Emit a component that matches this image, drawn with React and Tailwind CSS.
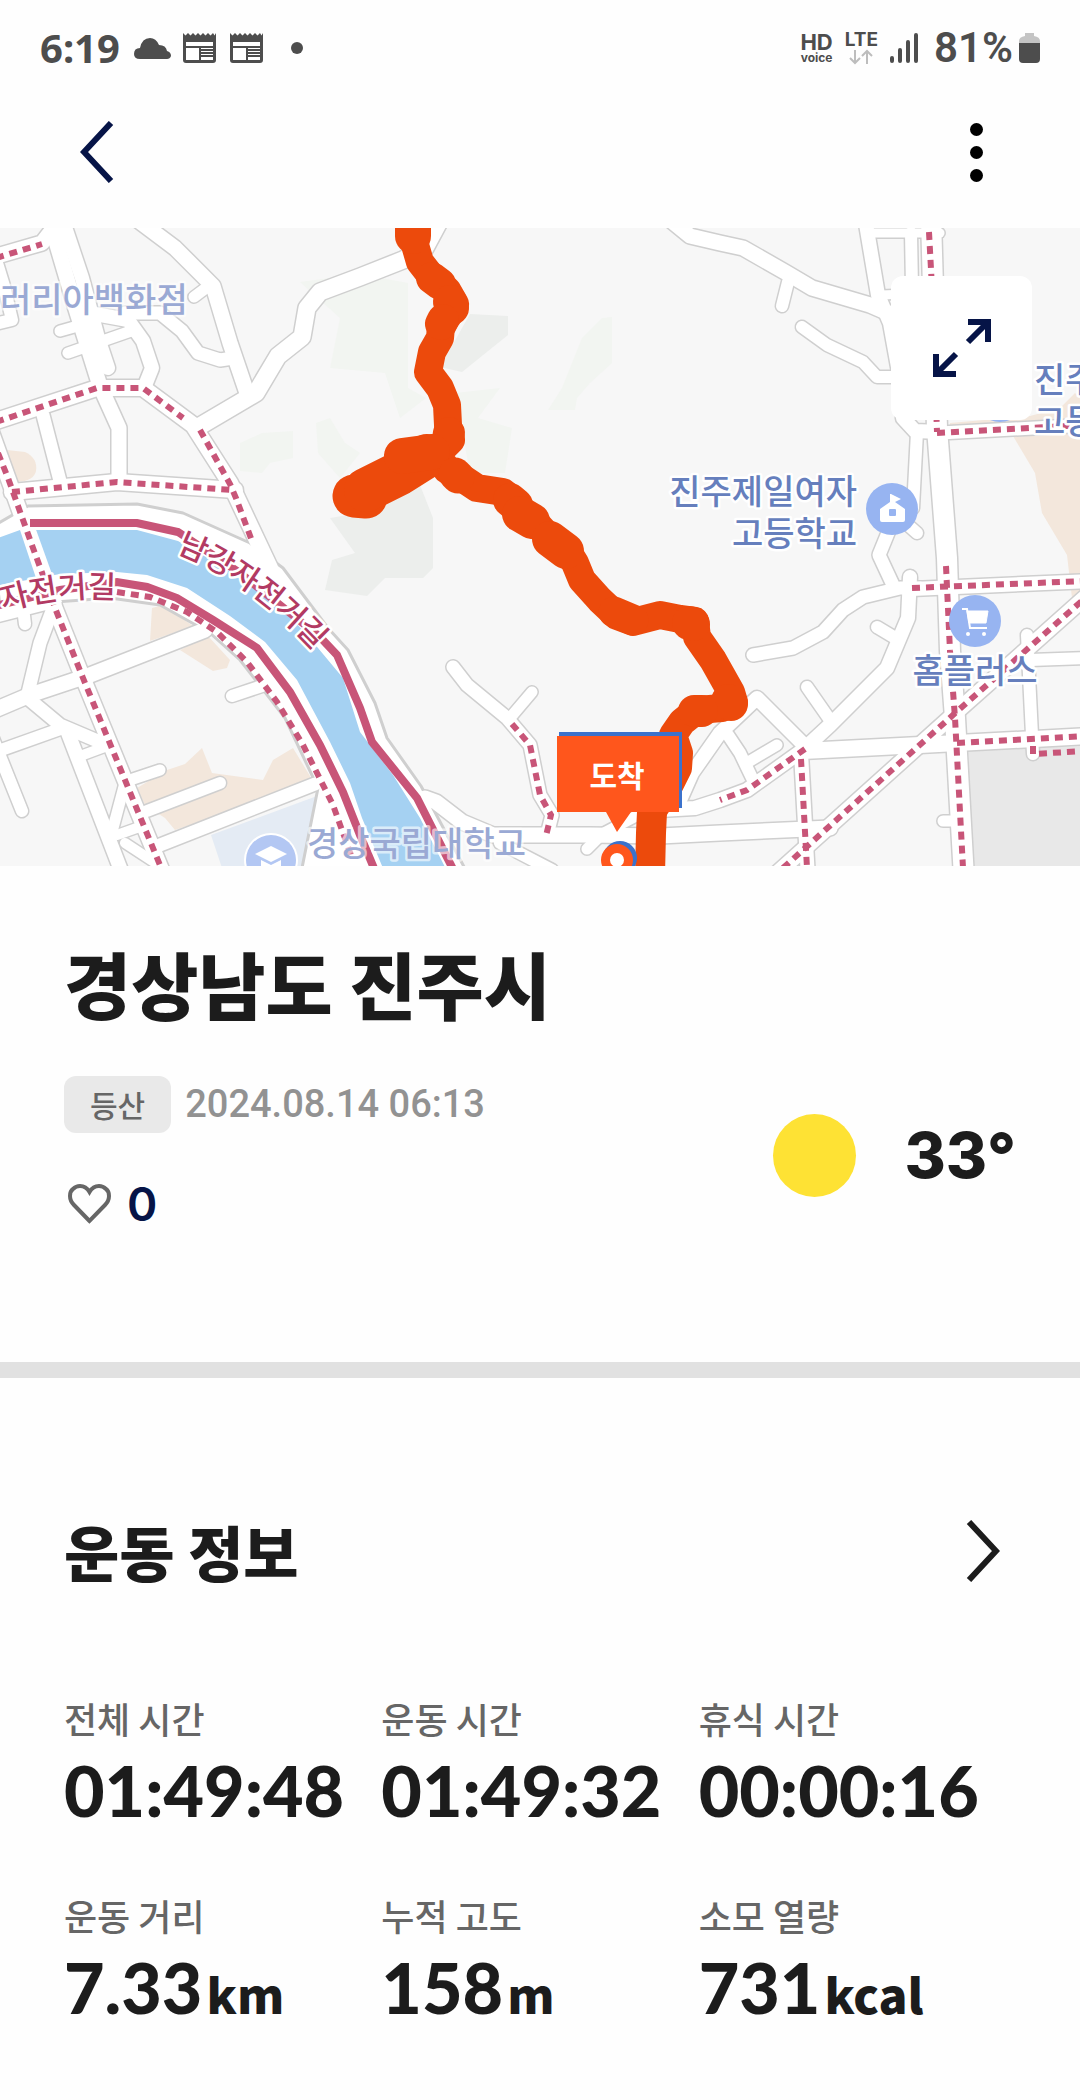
const ROADS = [
  { w: 15, d: "-10,30 42,15 60,-8" },
  { w: 15, d: "52,0 75,78 100,158 119,200 119,253" },
  { w: 14, d: "62,-10 82,50 98,110 108,140" },
  { w: 15, d: "135,-10 175,20 213,58 230,115 247,165" },
  { w: 11, d: "194,69 210,57" },
  { w: 17, d: "200,198 256,165 278,128 302,109 307,80 320,64 360,49 403,32 425,20 440,-8" },
  { w: 16, d: "-10,195 97,160 143,160 193,197 230,255 270,340" },
  { w: 13, d: "125,85 160,85 182,103 198,125 220,132 233,130" },
  { w: 14, d: "95,86 128,92 143,113 152,140 146,155" },
  { w: 11, d: "60,103 92,94" },
  { w: 11, d: "68,125 134,102" },
  { w: 12, d: "-10,97 12,92 4,58 -3,35" },
  { w: 13, d: "43,187 60,253" },
  { w: 16, d: "12,264 117,254 235,262" },
  { w: 15, d: "-10,200 8,250 33,320 55,380 83,450 165,650" },
  // south-west blocks
  { w: 16, d: "-10,388 53,372" },
  { w: 12, d: "25,396 23,380" },
  { w: 13, d: "55,375 40,415 28,465" },
  { w: 15, d: "-10,484 30,467 90,447 205,402" },
  { w: 13, d: "30,472 60,497 107,517" },
  { w: 12, d: "-10,526 63,500" },
  { w: 12, d: "-8,508 22,583" },
  { w: 14, d: "68,505 122,645" },
  { w: 10, d: "83,527 110,517" },
  { w: 11, d: "125,555 113,600" },
  { w: 10, d: "117,607 145,597" },
  { w: 10, d: "125,615 160,638" },
  { w: 11, d: "133,551 160,542" },
  { w: 12, d: "147,583 220,555" },
  { w: 13, d: "160,617 315,556" },
  { w: 12, d: "232,468 262,458" },
  // middle
  { w: 13, d: "453,439 467,457 507,490 530,517 540,567 552,587 547,607" },
  { w: 11, d: "532,464 510,490" },
  { w: 15, d: "425,570 436,574 462,594 493,607 590,607 660,608 720,605 830,600" },
  { w: 12, d: "500,615 552,642" },
  { w: 11, d: "587,621 602,606 640,586" },
  // east
  { w: 15, d: "668,-10 690,8 720,15 743,20 785,44 812,60 870,77 893,87" },
  { w: 12, d: "788,54 782,78" },
  { w: 12, d: "802,99 827,117 863,134 877,149 900,149" },
  { w: 14, d: "865,-10 878,67 890,95 900,150 903,190 915,203 940,204" },
  { w: 9, d: "867,5 940,5" },
  { w: 9, d: "882,67 930,65" },
  { w: 12, d: "911,5 912,60" },
  { w: 20, d: "931,-10 937,200 947,330 950,423 955,490 964,650" },
  { w: 12, d: "917,204 913,280" },
  { w: 12, d: "917,305 900,290" },
  { w: 13, d: "890,300 879,327 893,357" },
  { w: 13, d: "940,205 1090,197" },
  { w: 14, d: "912,361 1090,353" },
  { w: 13, d: "753,427 793,420 823,404 843,382 863,369 900,360 920,360" },
  { w: 14, d: "910,349 908,390 887,440 830,497 803,522" },
  { w: 12, d: "877,399 897,411" },
  { w: 12, d: "807,459 830,492" },
  { w: 14, d: "807,520 757,470 720,505 692,545 680,572" },
  { w: 12, d: "728,507 740,525 752,550" },
  { w: 11, d: "777,517 750,533" },
  { w: 14, d: "803,522 747,562 720,572 695,580 660,582" },
  { w: 16, d: "803,523 920,517 1090,508" },
  { w: 14, d: "801,525 808,650" },
  { w: 15, d: "775,647 953,487 1090,365" },
  { w: 12, d: "1027,407 1032,507 1033,526" },
  { w: 12, d: "1030,432 1090,430" },
  { w: 11, d: "943,593 960,593" },
];

const BIKE_LANES = [
  "-4,30 42,16",
  "-4,194 97,160 143,160 183,190",
  "200,202 230,256 236,270 252,313",
  "12,264 117,254 232,262",
  "-2,225 8,250 33,320 55,380 83,450 162,642",
  "117,364 150,369 187,384 217,404 247,434 277,474 303,517 333,577 352,630",
  "512,496 530,517 540,567 551,587 546,608",
  "929,4 932,60 937,204",
  "937,205 1085,197",
  "912,360 1085,353",
  "946,338 950,423 955,490 963,640",
  "805,521 747,562 720,572",
  "957,515 1085,508",
  "801,531 807,640",
  "783,640 953,487 1085,370",
  "1033,518 1033,526 1085,523",
];

const ROUTE =
  "413,-6 413,10 420,34 434,52 447,62 455,76 448,88 441,98 440,110 432,124 428,144 440,160 447,177 448,197 451,212 437,226 447,242 462,250 477,260 503,264 516,274 518,288 537,296 550,310 567,322 575,335 582,352 600,372 617,388 633,394 660,387 680,391 695,393 697,409 713,432 731,464 734,474 722,480 697,482 682,494 673,507 679,525 678,540 668,560 652,584";

function RoadLines({ stroke, extra }) {
  return ROADS.map((road) => (
    <polyline key={road.d} points={road.d} stroke={stroke} strokeWidth={road.w + extra} />
  ));
}

function MapLabel({ x, y, children, faded, anchor = "start" }) {
  return (
    <text
      x={x}
      y={y}
      textAnchor={anchor}
      fontSize="34"
      fontWeight="500"
      fill={faded ? "#9aa9d4" : "#667fbd"}
      stroke="#ffffff"
      strokeOpacity={faded ? "0.6" : "1"}
      strokeWidth="5"
      strokeLinejoin="round"
      paintOrder="stroke"
    >
      {children}
    </text>
  );
}

function TrailMap() {
  return (
    <svg viewBox="0 0 1080 638" className="block h-auto w-full" role="img" aria-label="운동 경로 지도">
      <rect width="1080" height="638" fill="#f7f7f7" />

      {/* parks, blocks and campuses */}
      <g fill="#f2f5f1">
        <path d="M240 215 262 205 293 203 293 230 270 235 262 245 240 243Z" />
        <path d="M300 54 360 46 408 55 408 160 426 170 400 190 385 145 330 140 340 90Z" />
        <path d="M316 195 330 190 345 215 360 225 340 250 318 225Z" />
        <path d="M455 165 500 160 478 190 512 200 505 245 470 245Z" />
        <path d="M602 90 612 89 612 135 590 155 577 170 575 182 548 182 562 160 582 110Z" />
      </g>
      <g fill="#eceeec">
        <path d="M470 86 508 88 508 107 462 144 440 139Z" />
        <path d="M420 257 433 290 433 340 423 350 385 350 367 368 325 362 332 332 355 325 330 290 360 285Z" />
      </g>
      <g fill="#f3e7dc">
        <path d="M7 222 25 224Q38 230 36 243 34 253 17 254Z" />
        <path d="M152 380 163 377 193 398 150 413Z" />
        <path d="M180 422 208 408 230 432 227 440 213 443Z" />
        <path d="M137 560 167 542 185 536 202 520 212 545 263 552 273 532 293 520 310 548 310 556 175 602 165 590 145 577Z" />
        <path d="M1013 208 1035 245 1042 285 1067 327 1072 370 1080 374 1080 205Z" />
        <path d="M950 195 1030 188 1060 180 1075 165 1080 170 1080 198 950 205Z" />
      </g>
      <path d="M211 607 317 568 323 594 335 640 222 640Z" fill="#e4ebf4" />
      <path d="M968 522 1080 518 1080 638 973 638Z" fill="#e8e8e8" />

      <g fill="none" strokeLinecap="round" strokeLinejoin="round">
        <RoadLines stroke="#cfcfcf" extra={3} />
        {/* river banks */}
        <path
          d="M-10 300 28 278 137 276 183 285 250 315 283 340 328 400 348 422 375 475 387 510 421 558 470 650 300 650 318 560 285 490 240 432 210 405 160 377 110 370 0 378Z"
          fill="#ffffff"
          stroke="#cfcfcf"
          strokeWidth="3"
        />
        <RoadLines stroke="#ffffff" extra={0} />
      </g>

      <path
        d="M-5 311 20 302 137 302 178 313 225 340 283 380 318 420 343 450 360 504 393 547 420 590 448 645 385 645 362 590 350 555 330 514 297 452 265 414 230 388 187 360 147 347 117 344 60 346 -5 358Z"
        fill="#a5d1f2"
      />
      <path d="M18 296 34 296 62 374 44 374Z" fill="#ffffff" />

      <g fill="none" stroke="#c85578" strokeWidth="8">
        <polyline points="30,295 137,295 178,304 240,345 290,385 320,409 337,427 360,480 372,514 417,570 455,645" />
        <polyline points="-5,378 60,362 117,354 147,359 177,370 213,392 257,420 290,464 320,517 343,564 360,607 376,645" />
      </g>
      <g fill="none" stroke="#c85578" strokeWidth="6" strokeDasharray="8 6">
        {BIKE_LANES.map((d) => (
          <polyline key={d} points={d} />
        ))}
      </g>

      {/* bike path names follow the river */}
      <path id="north-bank" d="M176 324 Q250 352 319 428" fill="none" />
      <path id="south-bank" d="M3 383 Q60 366 120 371" fill="none" />
      <g
        fontSize="31"
        fontWeight="500"
        fill="#b23a63"
        stroke="#ffffff"
        strokeWidth="5"
        strokeLinejoin="round"
        paintOrder="stroke"
      >
        <text>
          <textPath href="#north-bank">남강자전거길</textPath>
        </text>
        <text>
          <textPath href="#south-bank">자전거길</textPath>
        </text>
      </g>

      <circle cx="271" cy="632" r="27" fill="#ffffff" />
      <circle cx="271" cy="632" r="25" fill="#b3c7f3" />
      <path d="M271 618 287 626 271 634 255 626Z" fill="#ffffff" />
      <path d="M261 632 271 637 281 632V640H261Z" fill="#ffffff" />

      <circle cx="1000" cy="168" r="26" fill="#97b4f1" />

      <circle cx="892" cy="281" r="26" fill="#97b4f1" />
      <path
        d="M891 266 901 271 895 274 905 281V292Q905 294 903 294H882Q880 294 880 292V281L890 274V266Z"
        fill="#ffffff"
      />
      <rect x="889" y="281" width="7" height="7" rx="1" fill="#97b4f1" />

      <circle cx="975" cy="393" r="26" fill="#97b4f1" />
      <path d="M962 381H967L970 400H987" fill="none" stroke="#ffffff" strokeWidth="2" />
      <path d="M967 383H988L986 395H969Z" fill="#ffffff" stroke="#ffffff" strokeLinejoin="round" />
      <circle cx="968" cy="406" r="2" fill="#ffffff" />
      <circle cx="984" cy="406" r="2" fill="#ffffff" />

      <MapLabel x="0" y="84" faded>
        러리아백화점
      </MapLabel>
      <MapLabel x="307" y="628" faded>
        경상국립대학교
      </MapLabel>
      <MapLabel x="857" y="276" anchor="end">
        진주제일여자
      </MapLabel>
      <MapLabel x="857" y="318" anchor="end">
        고등학교
      </MapLabel>
      <MapLabel x="975" y="455" anchor="middle">
        홈플러스
      </MapLabel>
      <MapLabel x="1034" y="164">진주</MapLabel>
      <MapLabel x="1034" y="206">고등</MapLabel>

      {/* walked route */}
      <g fill="none" stroke="#ec4a0c" strokeLinecap="round" strokeLinejoin="round">
        <polyline points={ROUTE} strokeWidth="28" />
        <polyline points="413,-6 413,8" strokeWidth="36" />
        <polyline points="432,50 440,56" strokeWidth="32" />
        <polyline points="450,74 452,80" strokeWidth="34" />
        <polyline points="443,92 441,96" strokeWidth="32" />
        <polyline points="449,205 448,211" strokeWidth="32" />
        <polyline points="354,268 366,269" strokeWidth="43" />
        <polyline points="366,262 400,245 427,228" strokeWidth="44" />
        <polyline points="402,228 432,224" strokeWidth="36" />
        <polyline points="455,246 458,249" strokeWidth="33" />
        <polyline points="510,272 516,277" strokeWidth="34" />
        <polyline points="520,286 532,293" strokeWidth="36" />
        <polyline points="550,311 566,323" strokeWidth="36" />
        <polyline points="614,384 633,392" strokeWidth="31" />
        <polyline points="689,395 693,396" strokeWidth="34" />
        <polyline points="728,473 731,476" strokeWidth="34" />
        <polyline points="694,483 702,483" strokeWidth="32" />
        <polyline points="652,584 651,605 650,646" strokeWidth="30" />
      </g>

      <circle cx="620" cy="630" r="17" fill="#3b72cc" />
      <circle cx="617" cy="632" r="16" fill="#ff561c" />
      <circle cx="617" cy="632" r="7" fill="#ffffff" />
      <rect x="559" y="504" width="123" height="76" fill="#3b72cc" />
      <path d="M557 508H679V584H631L617 604 606 584H557Z" fill="#ff561c" />
      <text x="617" y="559" textAnchor="middle" fontSize="30" fontWeight="700" fill="#ffffff">
        도착
      </text>
    </svg>
  );
}

function NewsIcon() {
  return (
    <svg viewBox="0 0 33 30" className="h-[30px] w-[33px]" aria-hidden="true">
      <path
        d="M0 0 2.500 2.500 5 0 7.500 2.500 10 0 12.500 2.500 15 0 17.500 2.500 20 0 22.500 2.500 25 0 27.500 2.500 30 0 31.500 2.500 33 0V27Q33 30 30 30H3Q0 30 0 27Z"
        fill="#4d4d4d"
      />
      <path d="M3 9H30V13H3ZM3 15H16V27H3ZM18 15H30V16H18ZM18 18H30V19H18ZM18 21H30V22H18ZM18 24H30V27H18Z" fill="#ffffff" />
    </svg>
  );
}

function StatusBar() {
  return (
    <div className="flex h-[76px] items-center justify-between pt-5 pr-10 pl-10 text-[#4d4d4d]">
      <div className="flex items-center">
        <span className="font-['Noto_Sans',sans-serif] text-[40px] leading-10 font-bold">6:19</span>
        <svg viewBox="0 0 37 21" className="ml-3.5 h-[21px] w-[37px]" fill="currentColor" aria-hidden="true">
          <path d="M6 21Q0 21 0 16 0 10 6 10 8 0 16 0 22 0 25 7 32 7 33 13 37 14 37 18 36 21 33 21Z" />
        </svg>
        <div className="ml-3 flex gap-3.5">
          <NewsIcon />
          <NewsIcon />
        </div>
        <span className="ml-7 size-3 rounded-full bg-[#4d4d4d]" />
      </div>

      <div className="flex items-center">
        <div className="flex flex-col items-center font-['Inter',sans-serif]">
          <span className="text-[22px] leading-[19px] font-bold">HD</span>
          <span className="text-[12px] leading-[12px] font-bold">voice</span>
        </div>
        <div className="ml-3 flex flex-col items-center font-['Inter',sans-serif]">
          <span className="text-[19px] leading-[18px] font-bold">LTE</span>
          <svg viewBox="0 0 24 16" className="h-4 w-6" fill="none" stroke="#bdbdbd" strokeWidth="2" aria-hidden="true">
            <path d="M6 1V14M1 9 6 14 11 9M18 15V2M13 7 18 2 23 7" />
          </svg>
        </div>
        <svg
          viewBox="0 0 28 30"
          className="ml-3 h-[30px] w-7"
          fill="none"
          stroke="currentColor"
          strokeWidth="4"
          strokeLinecap="round"
          aria-hidden="true"
        >
          <path d="M2 25V28M10 17V28M18 9V28M26 2V28" />
        </svg>
        <span className="ml-4 font-['Roboto',sans-serif] text-[42px] leading-10 font-semibold">81%</span>
        <svg viewBox="0 0 21 30" className="ml-1.5 h-[30px] w-[21px]" aria-hidden="true">
          <path d="M6 0H15V3Q21 4 21 8V12H0V8Q0 4 6 3Z" fill="#c4c4c4" />
          <path d="M0 10H21V26Q21 30 17 30H4Q0 30 0 26Z" fill="#4d4d4d" />
        </svg>
      </div>
    </div>
  );
}

const STATS = [
  { label: "전체 시간", value: "01:49:48" },
  { label: "운동 시간", value: "01:49:32" },
  { label: "휴식 시간", value: "00:00:16" },
  { label: "운동 거리", value: "7.33", unit: "km" },
  { label: "누적 고도", value: "158", unit: "m" },
  { label: "소모 열량", value: "731", unit: "kcal" },
];

function Stat({ label, value, unit }) {
  return (
    <div>
      <dt className="text-[36px] leading-[48px] font-medium text-[#666666]">{label}</dt>
      <dd className="mt-2 flex items-baseline gap-1 leading-[80px] font-black whitespace-nowrap">
        <span className="font-['Lato',sans-serif] text-[70px]">{value}</span>
        {unit && <span className="text-[48px]">{unit}</span>}
      </dd>
    </div>
  );
}

function App() {
  return (
    <div className="min-h-screen bg-[#fefefe] font-['Noto_Sans_CJK_KR',sans-serif] text-[#1c1c1c]">
      <StatusBar />

      <header className="flex h-[152px] items-center justify-between pr-[74px] pl-20">
        <button type="button" aria-label="뒤로" className="text-[#061447]">
          <svg viewBox="0 0 34 62" className="h-[62px] w-[34px]" fill="none" stroke="currentColor" strokeWidth="6">
            <path d="M31 2 4 31 31 60" />
          </svg>
        </button>
        <button type="button" aria-label="더보기" className="flex w-[60px] flex-col items-center gap-2.5">
          <span className="size-[13px] rounded-full bg-black" />
          <span className="size-[13px] rounded-full bg-black" />
          <span className="size-[13px] rounded-full bg-black" />
        </button>
      </header>

      <div className="relative">
        <TrailMap />
        <button
          type="button"
          aria-label="지도 크게 보기"
          className="absolute top-12 right-12 flex h-36 w-[141px] items-center justify-center rounded-xl bg-white text-[#061447]"
        >
          <svg viewBox="0 0 58 58" className="size-[58px]" fill="none" stroke="currentColor" strokeWidth="6">
            <path d="M35 3H55V23M55 3 35 23" />
            <path d="M23 55H3V35M3 55 23 35" />
          </svg>
        </button>
      </div>

      <section className="flex items-start justify-between px-16 pt-16 pb-32">
        <div>
          <h1 className="text-[73px] leading-[104px] font-black">경상남도 진주시</h1>
          <div className="mt-[42px] flex items-center gap-3.5">
            <span className="rounded-xl bg-[#e9e9e9] px-[26px] py-2 text-[30px] leading-[41px] font-medium text-[#666666]">
              등산
            </span>
            <time className="font-['Roboto',sans-serif] text-[38px] leading-[41px] font-medium text-[#929292]">
              2024.08.14 06:13
            </time>
          </div>
          <button type="button" className="mt-[41px] flex items-center gap-4 px-1" aria-label="좋아요 0">
            <svg viewBox="0 0 43 40" className="h-10 w-[43px]" fill="none" stroke="#666666" strokeWidth="4" aria-hidden="true">
              <path d="M21.500 37 6 21Q2 17 2 12 2 7 5 5 8 2 12 2 18 2 21.500 8 25 2 31 2 35 2 38 5 41 7 41 12 41 17 37 21Z" />
            </svg>
            <span className="font-['Inter',sans-serif] text-[46px] leading-[60px] font-semibold text-[#061447]">0</span>
          </button>
        </div>
        <div className="flex items-center gap-12 pt-[184px]">
          <span className="size-[83px] rounded-full bg-[#fee234]" />
          <span className="font-['Inter',sans-serif] text-[63px] leading-[83px] font-extrabold">33°</span>
        </div>
      </section>

      <div className="h-4 bg-[#e1e1e1]" />

      <section className="px-16 pt-32">
        <div className="flex items-center justify-between">
          <h2 className="text-[60px] leading-[90px] font-black">운동 정보</h2>
          <button type="button" aria-label="운동 정보 자세히 보기" className="pr-4">
            <svg viewBox="0 0 34 62" className="h-[62px] w-[34px]" fill="none" stroke="currentColor" strokeWidth="6">
              <path d="M3 2 30 31 3 60" />
            </svg>
          </button>
        </div>
        <dl className="mt-[98px] grid grid-cols-3 gap-y-[61px]">
          {STATS.map((stat) => (
            <Stat key={stat.label} {...stat} />
          ))}
        </dl>
      </section>
    </div>
  );
}

export default App;
